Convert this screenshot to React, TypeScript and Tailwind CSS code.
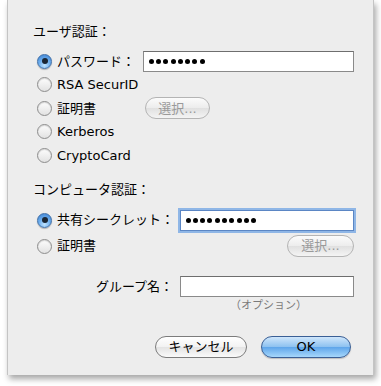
import React from "react";

const font = { fontFamily: '"DejaVu Sans", "Noto Sans CJK JP", sans-serif' };

const Radio = ({ on }: { on?: boolean }) =>
  on ? (
    <span className="relative flex h-[15px] w-[15px] shrink-0 items-center justify-center rounded-full border border-[#3f6fa8] bg-[radial-gradient(circle_at_50%_80%,#bfe3ff_0%,#6fb0ef_45%,#3b7fd0_100%)] shadow-[0_1px_1px_rgba(0,0,0,0.25)]">
      <span className="h-[6px] w-[6px] rounded-full bg-[#1a2634]" />
    </span>
  ) : (
    <span className="h-[15px] w-[15px] shrink-0 rounded-full border border-[#8d8d8d] bg-[linear-gradient(#fdfdfd,#e2e2e2)] shadow-[inset_0_1px_1px_rgba(0,0,0,0.15)]" />
  );

const Dots = ({ n }: { n: number }) => (
  <div className="flex items-center gap-[2.3px] pl-[5px]">
    {Array.from({ length: n }).map((_, i) => (
      <span key={i} className="h-[5px] w-[5px] rounded-full bg-black" />
    ))}
  </div>
);

const PillButton = ({ label, disabled, w }: { label: string; disabled?: boolean; w: string }) => (
  <div
    className={`flex h-[22px] ${w} items-center justify-center rounded-full border text-[13px] ${
      disabled
        ? "border-[#b4b4b4] bg-[linear-gradient(#fbfbfb,#ececec_50%,#e0e0e0_51%,#f4f4f4)] text-[#9a9a9a]"
        : "border-[#7c7c7c] bg-[linear-gradient(#ffffff,#f2f2f2_50%,#e3e3e3_51%,#fafafa)] text-black"
    }`}
  >
    {label}
  </div>
);

export default function App() {
  return (
    <div className="h-[386px] w-[381px] bg-white" style={font}>
      <div className="ml-[7px] flex h-[375px] w-[367px] flex-col border-l border-r border-[#c4c4c4] bg-[#ededed] pl-[25px] pr-[19px] text-[13px] text-black shadow-[2px_4px_6px_rgba(0,0,0,0.35)]">
        {/* ユーザ認証 */}
        <div className="mt-[24px] h-[16px] leading-[16px]">ユーザ認証：</div>
        <div className="mt-[9.5px] ml-[4px] flex flex-col">
          <div className="flex h-[23.5px] items-center">
            <Radio on />
            <span className="ml-[5px] w-[86px]">パスワード：</span>
            <div className="flex h-[21px] w-[212px] items-center border border-[#8a8a8a] border-t-[#6e6e6e] bg-white">
              <Dots n={8} />
            </div>
          </div>
          <div className="flex h-[23.5px] items-center">
            <Radio />
            <span className="ml-[5px]">RSA SecurID</span>
          </div>
          <div className="flex h-[23.5px] items-center">
            <Radio />
            <span className="ml-[5px] w-[88px]">証明書</span>
            <PillButton label="選択..." disabled w="w-[65px]" />
          </div>
          <div className="flex h-[23.5px] items-center">
            <Radio />
            <span className="ml-[5px]">Kerberos</span>
          </div>
          <div className="flex h-[23.5px] items-center">
            <Radio />
            <span className="ml-[5px]">CryptoCard</span>
          </div>
        </div>

        {/* コンピュータ認証 */}
        <div className="mt-[15px] h-[16px] leading-[16px]">コンピュータ認証：</div>
        <div className="mt-[10px] ml-[4px] flex flex-col">
          <div className="flex h-[24px] items-center">
            <Radio on />
            <span className="ml-[5px] w-[123px]">共有シークレット：</span>
            <div className="flex h-[21px] w-[175px] items-center border border-[#5b86c4] bg-white shadow-[0_0_0_2px_#8fb6e6]">
              <Dots n={10} />
            </div>
          </div>
          <div className="flex h-[28px] items-center">
            <Radio />
            <span className="ml-[5px]">証明書</span>
            <div className="ml-auto">
              <PillButton label="選択..." disabled w="w-[67px]" />
            </div>
          </div>
        </div>

        {/* グループ名 */}
        <div className="mt-[16px] flex h-[21px] items-center">
          <span className="w-[148px] pr-[7px] text-right">グループ名：</span>
          <div className="h-[21px] w-[175px] border border-[#8a8a8a] border-t-[#6e6e6e] bg-white" />
        </div>
        <div className="ml-[148px] mt-[2px] w-[175px] text-center text-[11px] leading-[14px] text-[#7a7a7a]">（オプション）</div>

        {/* buttons */}
        <div className="mt-[23px] flex justify-end gap-[14px] pr-[3px]">
          <PillButton label="キャンセル" w="w-[92px]" />
          <div className="flex h-[22px] w-[90px] items-center justify-center rounded-full border border-[#3a5f95] bg-[linear-gradient(#cfe6fb,#8cc1f0_50%,#5ea5ea_51%,#a6d7fb)] text-[13px] text-black shadow-[0_1px_1px_rgba(0,0,0,0.2)]">
            OK
          </div>
        </div>
      </div>
    </div>
  );
}
